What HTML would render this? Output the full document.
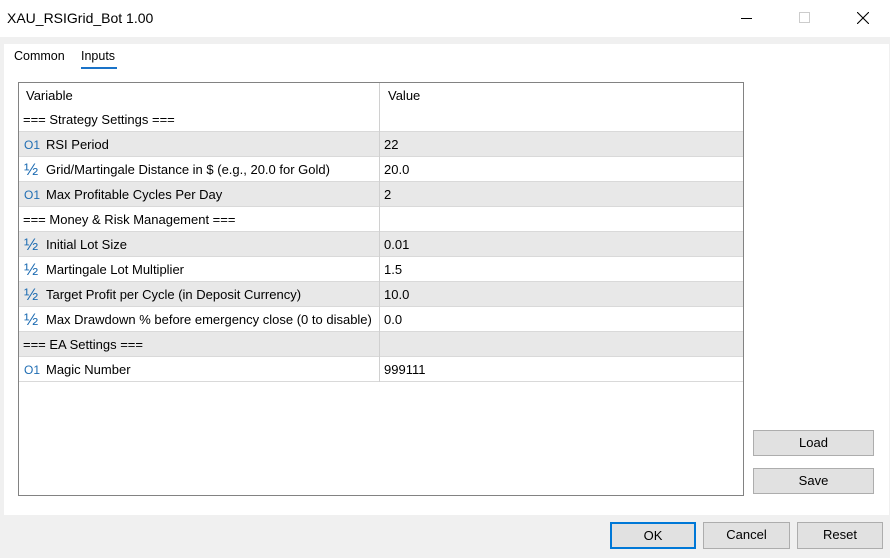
<!DOCTYPE html>
<html><head><meta charset="utf-8"><style>
*{margin:0;padding:0;box-sizing:border-box}
body{width:890px;height:558px;background:#f0f0f0;font-family:"Liberation Sans",sans-serif;font-size:13px;color:#000;position:relative;overflow:hidden}
.a{position:absolute}
.title{left:0;top:0;width:890px;height:37px;background:#fff}
.panel{left:4px;top:44px;width:885px;height:471px;background:#fff}
.tbl{left:18px;top:82px;width:726px;height:414px;border:1px solid #828282;background:#fff}
.row{position:absolute;left:0;width:724px;height:25px;border-bottom:1px solid #d9d9d9;line-height:26px}
.g{background:#e8e8e8}
.c1{position:absolute;left:0;top:0;width:360px;padding-left:7px;white-space:nowrap}
.c2{position:absolute;left:360px;top:0;height:25px;border-left:1px solid #d0d0d0;padding-left:4px;width:364px}
.ic{display:inline-block;width:22px;color:#1f6db3;font-size:12px}
.h{font-size:17px;line-height:20px;vertical-align:-1px}
.btn{position:absolute;background:#e1e1e1;border:1px solid #adadad;text-align:center;line-height:24px;font-size:13px}
</style></head><body>
<div class="a title"></div>
<div class="a" style="left:7px;top:10px;font-size:14px">XAU_RSIGrid_Bot 1.00</div>
<div class="a" style="left:741px;top:18px;width:11px;height:1px;background:#000"></div>
<div class="a" style="left:799px;top:12px;width:11px;height:11px;border:1px solid #ccc"></div>
<svg class="a" style="left:857px;top:12px" width="12" height="12"><path d="M0 0L12 12M12 0L0 12" stroke="#000" stroke-width="1.1"/></svg>
<div class="a panel"></div>
<div class="a" style="left:14px;top:49px;font-size:12.5px">Common</div>
<div class="a" style="left:81px;top:49px;font-size:12.5px">Inputs</div>
<div class="a" style="left:81px;top:67px;width:36px;height:2px;background:#1a73c8"></div>
<div class="a tbl">
<div class="row" style="top:0;border:none"><div class="c1">Variable</div><div class="c2" style="height:24px;padding-left:8px">Value</div></div>
<div class="row" style="top:24px"><div class="c1" style="padding-left:4px">=== Strategy Settings ===</div><div class="c2"></div></div>
<div class="row g" style="top:49px"><div class="c1" style="padding-left:5px"><span class="ic">O1</span>RSI Period</div><div class="c2">22</div></div>
<div class="row" style="top:74px"><div class="c1" style="padding-left:5px"><span class="ic h">½</span>Grid/Martingale Distance in $ (e.g., 20.0 for Gold)</div><div class="c2">20.0</div></div>
<div class="row g" style="top:99px"><div class="c1" style="padding-left:5px"><span class="ic">O1</span>Max Profitable Cycles Per Day</div><div class="c2">2</div></div>
<div class="row" style="top:124px"><div class="c1" style="padding-left:4px">=== Money &amp; Risk Management ===</div><div class="c2"></div></div>
<div class="row g" style="top:149px"><div class="c1" style="padding-left:5px"><span class="ic h">½</span>Initial Lot Size</div><div class="c2">0.01</div></div>
<div class="row" style="top:174px"><div class="c1" style="padding-left:5px"><span class="ic h">½</span>Martingale Lot Multiplier</div><div class="c2">1.5</div></div>
<div class="row g" style="top:199px"><div class="c1" style="padding-left:5px"><span class="ic h">½</span>Target Profit per Cycle (in Deposit Currency)</div><div class="c2">10.0</div></div>
<div class="row" style="top:224px"><div class="c1" style="padding-left:5px"><span class="ic h">½</span>Max Drawdown % before emergency close (0 to disable)</div><div class="c2">0.0</div></div>
<div class="row g" style="top:249px"><div class="c1" style="padding-left:4px">=== EA Settings ===</div><div class="c2"></div></div>
<div class="row" style="top:274px"><div class="c1" style="padding-left:5px"><span class="ic">O1</span>Magic Number</div><div class="c2">999111</div></div>
</div>
<div class="btn" style="left:753px;top:430px;width:121px;height:26px">Load</div>
<div class="btn" style="left:753px;top:468px;width:121px;height:26px">Save</div>
<div class="btn" style="left:610px;top:522px;width:86px;height:27px;border:2px solid #0078d7;line-height:23px">OK</div>
<div class="btn" style="left:703px;top:522px;width:87px;height:27px">Cancel</div>
<div class="btn" style="left:797px;top:522px;width:86px;height:27px">Reset</div>
</body></html>
